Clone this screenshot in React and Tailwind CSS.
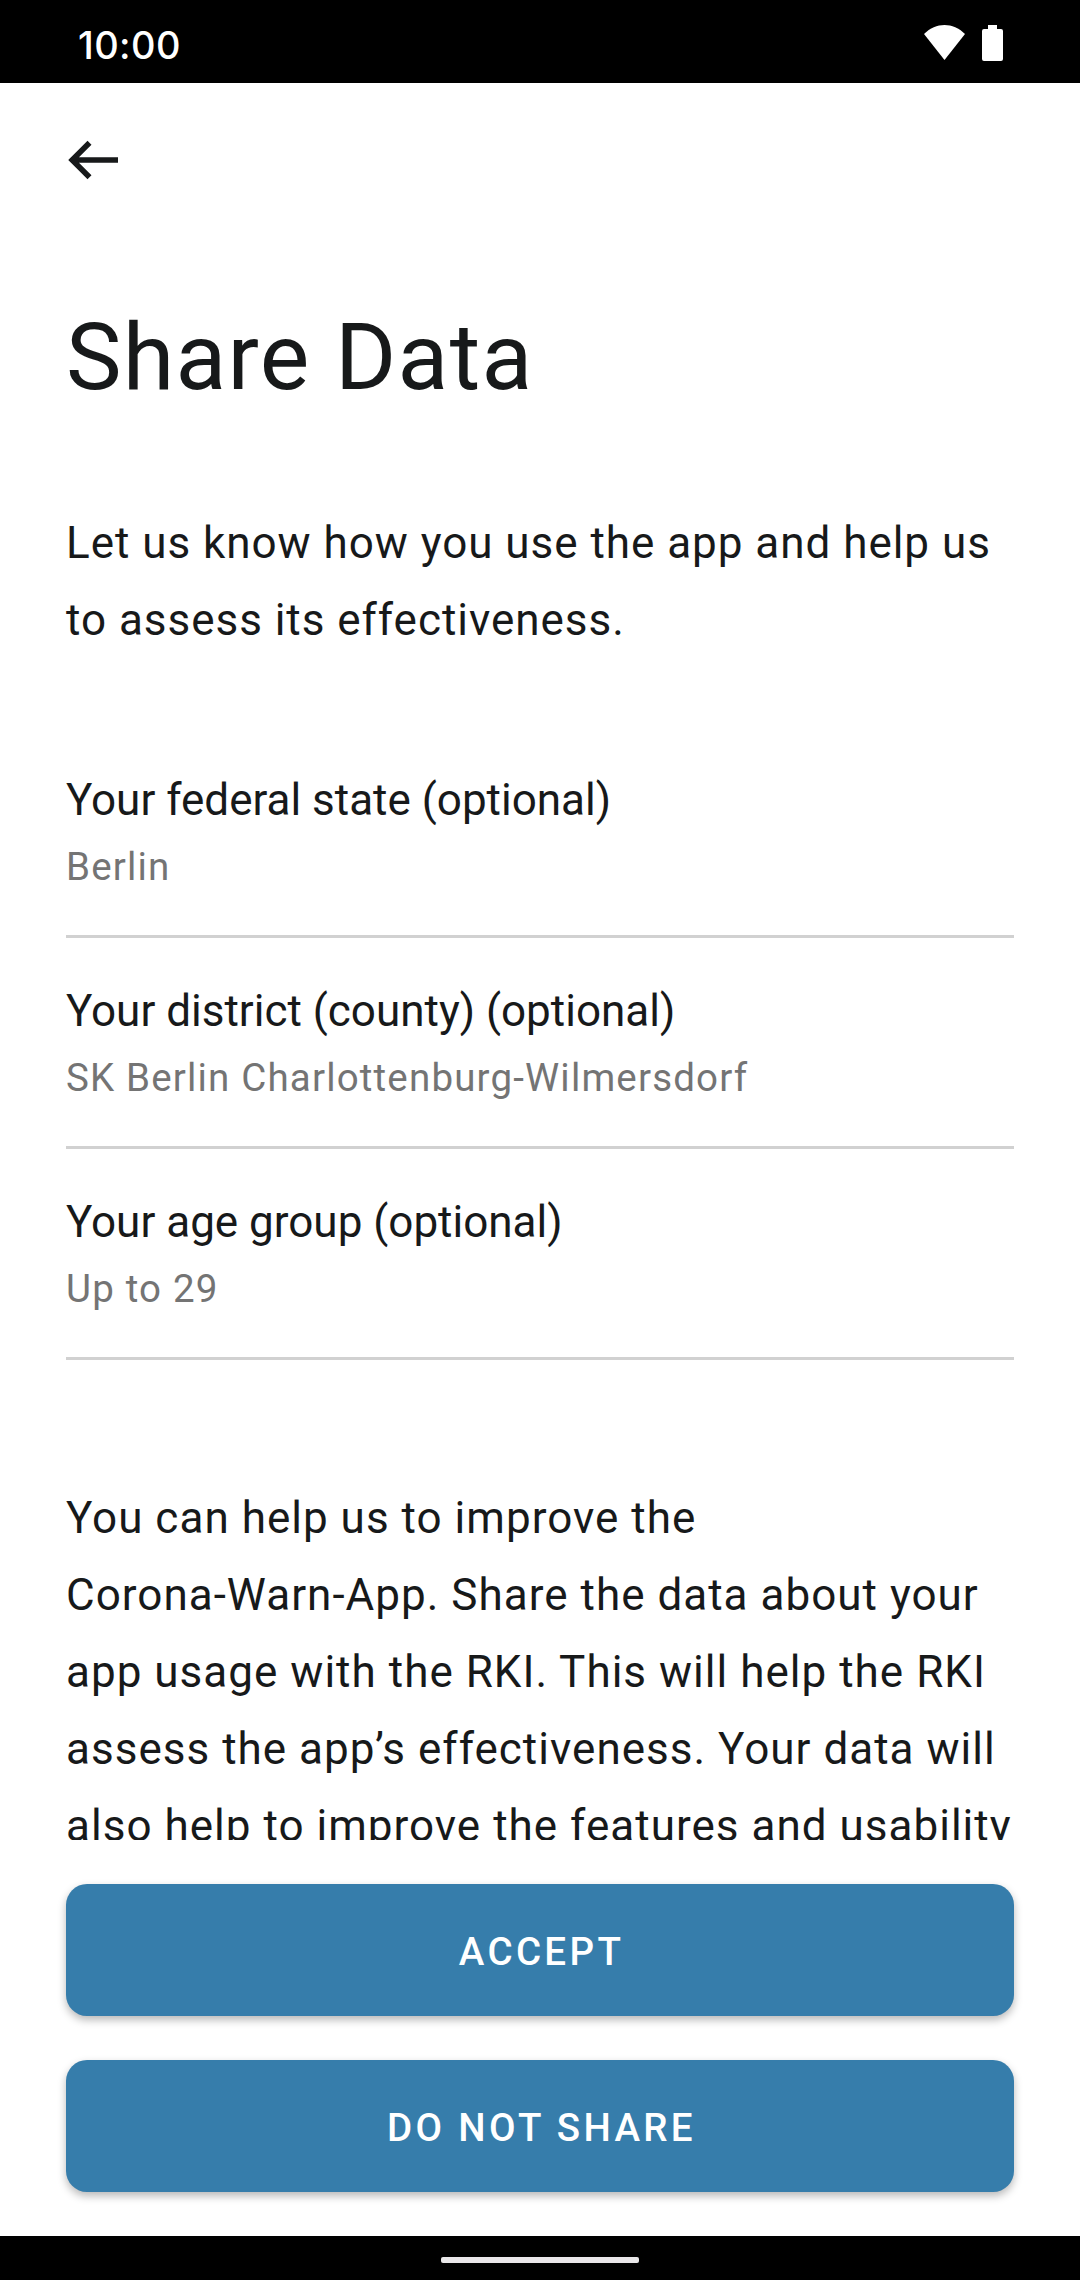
const fields = [
  ['Your federal state (optional)', 'Berlin'],
  ['Your district (county) (optional)', 'SK Berlin Charlottenburg-Wilmersdorf'],
  ['Your age group (optional)', 'Up to 29'],
];

function StatusBar() {
  return (
    <header className="flex h-[83px] shrink-0 items-start justify-between bg-black pl-[78px] pr-[77px] pt-[25px] text-white">
      <span className="pt-px font-[Inter,sans-serif] text-[38px] font-medium leading-[38px] tracking-[0.4px]">10:00</span>
      <div className="flex items-start gap-[17px]">
        <svg className="h-[35px] w-[41px]" viewBox="0 0 41 35" fill="currentColor">
          <path d="M0 9C12-3 29-3 41 9L20.5 35Z" />
        </svg>
        <svg className="h-[36px] w-[21px]" viewBox="0 0 21 36" fill="currentColor">
          <path d="M6 0h9v4h4a2 2 0 0 1 2 2v28a2 2 0 0 1-2 2H2a2 2 0 0 1-2-2V6a2 2 0 0 1 2-2h4Z" />
        </svg>
      </div>
    </header>
  );
}

function ActionButton({ children }) {
  return (
    <button className="flex h-[132px] w-full items-center justify-center rounded-[21px] bg-[#367dab] pl-[3px] pt-1 text-[38.5px] font-medium tracking-[3.35px] text-white shadow-[0_4px_8px_rgba(0,0,0,0.28)]">
      {children}
    </button>
  );
}

export default function App() {
  return (
    <div className="flex h-[2280px] w-[1080px] flex-col overflow-hidden bg-white font-[Roboto,sans-serif] text-[#17191a]">
      <StatusBar />
      <main className="h-[1757px] shrink-0 overflow-hidden px-[66px]">
        <div className="flex h-[154px] items-center pl-[2px]">
          <svg className="h-[40px] w-[50px]" viewBox="0 0 50 40" fill="none" stroke="currentColor" strokeWidth="5.6">
            <path d="M50 20H6M21.5 2.7L4.2 20l17.3 17.3" />
          </svg>
        </div>
        <h1 className="mt-[60px] text-[93.5px] leading-[120px] tracking-[1.25px]">Share Data</h1>
        <p className="mt-[88px] whitespace-nowrap text-[44px] leading-[77px] tracking-[0.97px]">
          Let us know how you use the app and help us<br />to assess its effectiveness.
        </p>
        <div className="mt-[111px]">
          {fields.map(([label, value]) => (
            <div key={label} className="mb-[43px] h-[168px] border-b-[3px] border-[#d1d1d1]">
              <div className="text-[44px] leading-[60px]">{label}</div>
              <div className="mt-[9px] text-[38.5px] leading-[56px] tracking-[1.17px] text-[#747474]">{value}</div>
            </div>
          ))}
        </div>
        <p className="mt-[120px] whitespace-nowrap text-[44px] leading-[77px] tracking-[1.02px]">
          You can help us to improve the<br />Corona-Warn-App. Share the data about your<br />app usage with the RKI. This will help the RKI<br />assess the app’s effectiveness. Your data will<br />also help to improve the features and usability
        </p>
      </main>
      <section className="flex h-[396px] shrink-0 flex-col gap-[44px] px-[66px] pt-[44px]">
        <ActionButton>ACCEPT</ActionButton>
        <ActionButton>DO NOT SHARE</ActionButton>
      </section>
      <footer className="flex h-[44px] shrink-0 items-start justify-center bg-black pt-[21px]">
        <div className="h-[6px] w-[198px] rounded-[2px] bg-[#e9e7e9]" />
      </footer>
    </div>
  );
}
